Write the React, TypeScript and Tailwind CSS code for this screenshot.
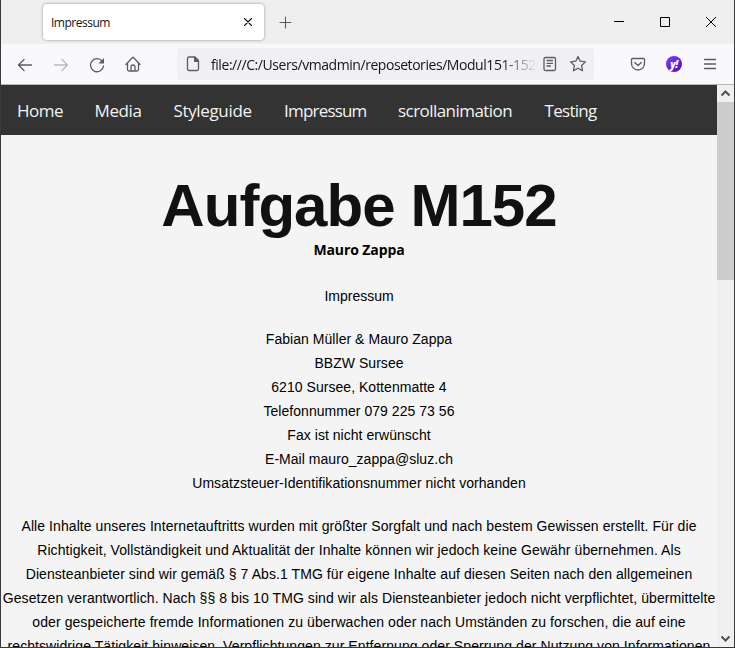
const stroke = { fill: "none", stroke: "#5b5b66", strokeWidth: 1.3, strokeLinecap: "round", strokeLinejoin: "round" } as const;

const nav = [
  { label: "Home", cls: "w-[46px] ml-4 tracking-[-0.5px]" },
  { label: "Media", cls: "w-[47px] ml-[31.5px] tracking-[-0.4px]" },
  { label: "Styleguide", cls: "w-[79px] ml-8 tracking-[-0.35px]" },
  { label: "Impressum", cls: "w-[82px] ml-[31.5px] tracking-[-0.8px]" },
  { label: "scrollanimation", cls: "w-[114px] ml-8 tracking-[-0.55px]" },
  { label: "Testing", cls: "w-[53px] ml-[32.5px] tracking-[-0.7px]" },
];

const contact = [
  "Fabian Müller & Mauro Zappa",
  "BBZW Sursee",
  "6210 Sursee, Kottenmatte 4",
  "Telefonnummer 079 225 73 56",
  "Fax ist nicht erwünscht",
  "E-Mail mauro_zappa@sluz.ch",
  "Umsatzsteuer-Identifikationsnummer nicht vorhanden",
];

const liability = [
  "Alle Inhalte unseres Internetauftritts wurden mit größter Sorgfalt und nach bestem Gewissen erstellt. Für die",
  "Richtigkeit, Vollständigkeit und Aktualität der Inhalte können wir jedoch keine Gewähr übernehmen. Als",
  "Diensteanbieter sind wir gemäß § 7 Abs.1 TMG für eigene Inhalte auf diesen Seiten nach den allgemeinen",
  "Gesetzen verantwortlich. Nach §§ 8 bis 10 TMG sind wir als Diensteanbieter jedoch nicht verpflichtet, übermittelte",
  "oder gespeicherte fremde Informationen zu überwachen oder nach Umständen zu forschen, die auf eine",
  "rechtswidrige Tätigkeit hinweisen. Verpflichtungen zur Entfernung oder Sperrung der Nutzung von Informationen",
];

function TitleBar() {
  return (
    <div className="flex h-11 shrink-0 bg-[#efefef]">
      <div className="mt-1 ml-[42px] flex h-9 w-[221px] items-center rounded bg-white pl-2 shadow-[0_0_3px_rgba(0,0,0,0.4)]">
        <span className="mt-0.5 w-[189px] text-[12px] tracking-[-0.5px] text-[#15141a]">Impressum</span>
        <svg width="16" height="16"><path d="M4.500 4.500l7 7M11.500 4.500l-7 7" {...stroke} stroke="#15141a" strokeWidth={1.1} /></svg>
      </div>
      <svg width="16" height="16" className="mt-[14px] ml-[13px]"><path d="M8.500 3v11M3 8.500h11" {...stroke} strokeWidth={1.1} /></svg>
      <div className="ml-auto flex">
        <svg width="16" height="16" className="mt-[13px] mr-[30px]"><path d="M3 8.500h10" stroke="#000" /></svg>
        <svg width="16" height="16" className="mt-[13px] mr-[30px]"><path d="M3.500 4.500h9v9h-9z" fill="none" stroke="#000" /></svg>
        <svg width="16" height="16" className="mt-[13px] mr-[15px]"><path d="M3 4l10 10M13 4L3 14" stroke="#000" /></svg>
      </div>
    </div>
  );
}

function Toolbar() {
  return (
    <div className="flex h-[41px] shrink-0 items-center border-b border-[#b8b8bc] bg-[#f9f9fb]">
      <svg width="16" height="16" className="mt-px ml-4"><path d="M1.500 8H14.500M7 2.500L1.500 8l5.500 5.500" {...stroke} /></svg>
      <svg width="16" height="16" className="mt-px ml-5" opacity="0.4"><path d="M1.500 8H14.500M9 2.500L14.500 8 9 13.500" {...stroke} /></svg>
      <svg width="16" height="16" className="mt-px ml-5"><path d="M13 4A6.500 6.500 0 1 0 14.500 9" {...stroke} /><path d="M15 1v5.500H9.500z" fill="#5b5b66" /></svg>
      <svg width="16" height="16" className="ml-5"><path d="M1 8.500l6.500-7q.5-.5 1 0l6.500 7M2.500 7v6.500q0 1.500 1.500 1.500h8q1.500 0 1.500-1.500V7M6 15v-4.500q0-1.500 2-1.500t2 1.500V15" {...stroke} /></svg>
      <div className="ml-9 flex h-8 w-[417px] items-center rounded bg-[#f0f0f4]">
        <svg width="16" height="16" className="ml-2"><path d="M2.500 2.500q0-1.500 1.500-1.500h6l3.500 3.500V13q0 1.500-1.500 1.500H4q-1.500 0-1.500-1.500z" {...stroke} /><path d="M9 1h1.500L14 4.500V6H9z" fill="#5b5b66" /></svg>
        <div className="mt-0.5 ml-[10px] w-[325px] whitespace-nowrap text-[14px] leading-6 tracking-[-0.44px] text-[#15141a] [mask-image:linear-gradient(to_right,black_290px,transparent_326px)]">
          file:///C:/Users/vmadmin/reposetories/Modul151-152
        </div>
        <svg width="16" height="16" className="ml-[6px]"><rect x="2" y="1.500" width="11.500" height="13" rx="1.500" {...stroke} /><path d="M5 4.500h5.500M5 7.300h5.500M5 10h3.500" {...stroke} /></svg>
        <svg width="18" height="18" className="ml-[11px]"><path d="M9 1.500l2.200 4.700 5.200.7-3.800 3.600.9 5.200L9 13.200l-4.500 2.500.9-5.200-3.800-3.600 5.200-.7z" {...stroke} /></svg>
      </div>
      <svg width="16" height="16" className="ml-9"><path d="M2.500 2.500h11q1 0 1 1v4a6.500 6.500 0 0 1-13 0v-4q0-1 1-1zM4.800 6.500L8 9.500l3.200-3" {...stroke} /></svg>
      <div className="ml-5 flex size-4 items-center justify-center rounded-full bg-gradient-to-br from-[#7b3cff] to-[#5200c4] pb-px text-[10px] leading-none font-extrabold italic tracking-[-0.5px] text-white">y!</div>
      <svg width="16" height="16" className="ml-5"><path d="M2.500 3.500h11M2.500 8h11M2.500 12.500h11" {...stroke} /></svg>
    </div>
  );
}

function Scrollbar() {
  return (
    <div className="flex w-[17px] shrink-0 flex-col bg-[#f0f0f0]">
      <svg width="17" height="17"><path d="M4.500 10.500l4-4 4 4" fill="none" stroke="#505050" strokeWidth="2" /></svg>
      <div className="h-[178px] bg-[#cdcdcd]" />
      <svg width="17" height="17" className="mt-auto"><path d="M4.500 6.500l4 4 4-4" fill="none" stroke="#505050" strokeWidth="2" /></svg>
    </div>
  );
}

export default function App() {
  return (
    <div className="flex h-[648px] w-[735px] flex-col overflow-hidden border border-t-0 border-[#3a3a3a] bg-[#f4f4f4] font-['Open_Sans',sans-serif]">
      <TitleBar />
      <Toolbar />
      <div className="flex min-h-0 flex-1">
        <main className="w-[716px] overflow-hidden">
          <nav className="flex h-[50px] items-center bg-[#333] pt-0.5 text-[17px] whitespace-nowrap text-[#f2f2f2]">
            {nav.map((n) => <a key={n.label} className={n.cls}>{n.label}</a>)}
          </nav>
          <div className="text-center font-['Liberation_Sans',Arial,sans-serif] text-[14px] leading-6 whitespace-nowrap text-black">
            <h1 className="mt-[41px] text-[60px] leading-[60px] font-bold tracking-[-0.95px] text-[#111]">Aufgabe M152</h1>
            <p className="mt-0.5 font-['Open_Sans',sans-serif] text-[14px] font-bold tracking-[-0.1px]">Mauro Zappa</p>
            <p className="mt-[22px]">Impressum</p>
            <div className="mt-[19px] tracking-[0.04px]">{contact.map((t) => <p key={t}>{t}</p>)}</div>
            <div className="mt-[19px] tracking-[0.075px]">{liability.map((t) => <p key={t}>{t}</p>)}</div>
          </div>
        </main>
        <Scrollbar />
      </div>
    </div>
  );
}
